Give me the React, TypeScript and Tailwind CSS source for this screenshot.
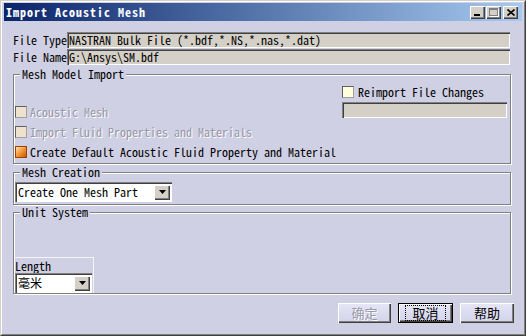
import React from "react";

const MONO = "font-['Noto_Sans_Mono_CJK_SC','Liberation_Mono',monospace] text-[12px]";
const SUNKEN =
  "shadow-[inset_1px_1px_0_#808080,inset_2px_2px_0_#404040,inset_-1px_-1px_0_#ffffff]";
const RAISED =
  "shadow-[inset_1px_1px_0_#ffffff,inset_-1px_-1px_0_#404040,inset_-2px_-2px_0_#808080]";
const ETCHED = "border border-[#808080] shadow-[1px_1px_0_#ffffff,inset_1px_1px_0_#ffffff]";

/** Small drop-down arrow button used by the combo boxes */
const ArrowButton: React.FC = () => (
  <div
    className={`flex items-center justify-center w-[16px] h-[15px] bg-[#d4d0c8] ${RAISED}`}
  >
    <svg width="7" height="4" viewBox="0 0 7 4" aria-hidden="true">
      <path d="M0 0h7L3.5 4z" fill="#000" />
    </svg>
  </div>
);

const Combo: React.FC<{ value: string; width: string }> = ({ value, width }) => (
  <div
    className={`flex items-center justify-between h-[20px] bg-white pl-[3px] pr-[2px] ${SUNKEN} ${width}`}
  >
    <span className="text-black leading-[16px]">{value}</span>
    <ArrowButton />
  </div>
);

const Check: React.FC<{ kind: "off" | "disabled" | "on" }> = ({ kind }) => {
  if (kind === "on") {
    return (
      <span className="w-[12px] h-[12px] border border-[#a04000] bg-[linear-gradient(135deg,#ffe0a8,#f09030_55%,#c05808)]" />
    );
  }
  return (
    <span
      className={`w-[12px] h-[12px] border border-t-[#606060] border-l-[#606060] border-r-[#a0a0a0] border-b-[#a0a0a0] ${
        kind === "off" ? "bg-[#ffffdc]" : "bg-[#eee2cc]"
      }`}
    />
  );
};

const TitleButton: React.FC<{ children: React.ReactNode }> = ({ children }) => (
  <div
    className={`flex items-center justify-center w-[15px] h-[13px] bg-[#d4d0c8] ${RAISED}`}
  >
    {children}
  </div>
);

const Button: React.FC<{
  label: string;
  disabled?: boolean;
  focused?: boolean;
  width: string;
}> = ({ label, disabled, focused, width }) => (
  <div
    className={`flex items-center justify-center h-[20px] bg-[linear-gradient(#e6e6f6,#d2d2ea)] ${
      focused ? "border border-black" : ""
    } ${RAISED} ${width}`}
  >
    <span
      className={`font-['Noto_Sans_CJK_SC',sans-serif] text-[13px] leading-[14px] px-[6px] ${
        focused ? "border border-dotted border-black" : ""
      } ${disabled ? "text-[#9898a8] [text-shadow:1px_1px_0_#ffffff]" : "text-black"}`}
    >
      {label}
    </span>
  </div>
);

export default function App() {
  return (
    <div
      className={`w-[526px] h-[336px] bg-[#d0d0e4] border border-t-[#d4d0c8] border-l-[#d4d0c8] border-r-[#404040] border-b-[#404040] ${MONO}`}
    >
      <div className="h-full border border-t-white border-l-white border-r-[#808080] border-b-[#808080] pt-[1px] px-[2px] flex flex-col">
        {/* Title bar */}
        <div className="flex items-center justify-between h-[18px] bg-[linear-gradient(90deg,#0a246a,#a6caf0)] pl-[2px] pr-[4px]">
          <span className="text-white font-bold tracking-[1px] leading-[18px]">
            Import Acoustic Mesh
          </span>
          <div className="flex items-center">
            <TitleButton>
              <span className="mt-[6px] ml-[-1px] w-[6px] h-[2px] bg-black" />
            </TitleButton>
            <div className="ml-[1px]">
              <TitleButton>
                <span className="w-[9px] h-[8px] border border-t-2 border-[#808080] shadow-[1px_1px_0_#ffffff]" />
              </TitleButton>
            </div>
            <div className="ml-[2px]">
              <TitleButton>
                <svg width="8" height="7" viewBox="0 0 8 7" aria-hidden="true">
                  <path d="M0.5 0.5l7 6M7.5 0.5l-7 6" stroke="#000" strokeWidth="1.6" />
                </svg>
              </TitleButton>
            </div>
          </div>
        </div>

        {/* Body */}
        <div className="flex flex-col pl-[9px] text-black">
          <div className="flex h-[16px] mt-[11px]">
            <span className="w-[54px] leading-[16px]">File Type</span>
            <div className={`w-[443px] bg-[#d4d0c8] pl-[2px] leading-[16px] ${SUNKEN}`}>
              NASTRAN Bulk File (*.bdf,*.NS,*.nas,*.dat)
            </div>
          </div>
          <div className="flex h-[16px] mt-[1px]">
            <span className="w-[54px] leading-[16px]">File Name</span>
            <div className={`w-[443px] bg-[#d4d0c8] pl-[2px] leading-[16px] ${SUNKEN}`}>
              G:\Ansys\SM.bdf
            </div>
          </div>

          {/* Mesh Model Import */}
          <fieldset className={`w-[498px] h-[96px] mt-[3px] ${ETCHED}`}>
            <legend className="ml-[6px] px-[2px] leading-[12px] bg-[#d0d0e4]">
              Mesh Model Import
            </legend>
            <div className="flex">
              <div className="flex flex-col gap-[8px] pt-[26px] pl-[1px]">
                <div className="flex items-center gap-[3px] h-[12px]">
                  <Check kind="disabled" />
                  <span className="text-[#9898a8] [text-shadow:1px_1px_0_#ffffff]">
                    Acoustic Mesh
                  </span>
                </div>
                <div className="flex items-center gap-[3px] h-[12px]">
                  <Check kind="disabled" />
                  <span className="text-[#9898a8] [text-shadow:1px_1px_0_#ffffff]">
                    Import Fluid Properties and Materials
                  </span>
                </div>
                <div className="flex items-center gap-[3px] h-[12px]">
                  <Check kind="on" />
                  <span>Create Default Acoustic Fluid Property and Material</span>
                </div>
              </div>
              <div className="ml-auto mr-[3px] w-[165px] pt-[6px] flex flex-col">
                <div className="flex items-center gap-[4px] h-[12px]">
                  <Check kind="off" />
                  <span>Reimport File Changes</span>
                </div>
                <div className={`mt-[4px] h-[16px] bg-[#d4d0c8] ${SUNKEN}`} />
              </div>
            </div>
          </fieldset>

          {/* Mesh Creation */}
          <fieldset className={`w-[498px] h-[39px] mt-[2px] ${ETCHED}`}>
            <legend className="ml-[6px] px-[2px] leading-[12px] bg-[#d0d0e4]">
              Mesh Creation
            </legend>
            <div className="pt-[4px] pl-[1px]">
              <Combo value="Create One Mesh Part" width="w-[157px]" />
            </div>
          </fieldset>

          {/* Unit System */}
          <fieldset className={`w-[498px] h-[88px] mt-[1px] ${ETCHED}`}>
            <legend className="ml-[6px] px-[2px] leading-[12px] bg-[#d0d0e4]">
              Unit System
            </legend>
            <div className="mt-[39px] w-[80px] h-[36px] border-t border-r border-[#f4f4fa] flex flex-col">
              <span className="pl-[1px] leading-[15px]">Length</span>
              <div className="pl-[1px]">
                <Combo value="毫米" width="w-[77px]" />
              </div>
            </div>
          </fieldset>

          {/* Dialog buttons */}
          <div className="flex justify-end gap-[7px] mt-[9px] pr-[8px]">
            <Button label="确定" disabled width="w-[53px]" />
            <Button label="取消" focused width="w-[55px]" />
            <Button label="帮助" width="w-[54px]" />
          </div>
        </div>
      </div>
    </div>
  );
}
